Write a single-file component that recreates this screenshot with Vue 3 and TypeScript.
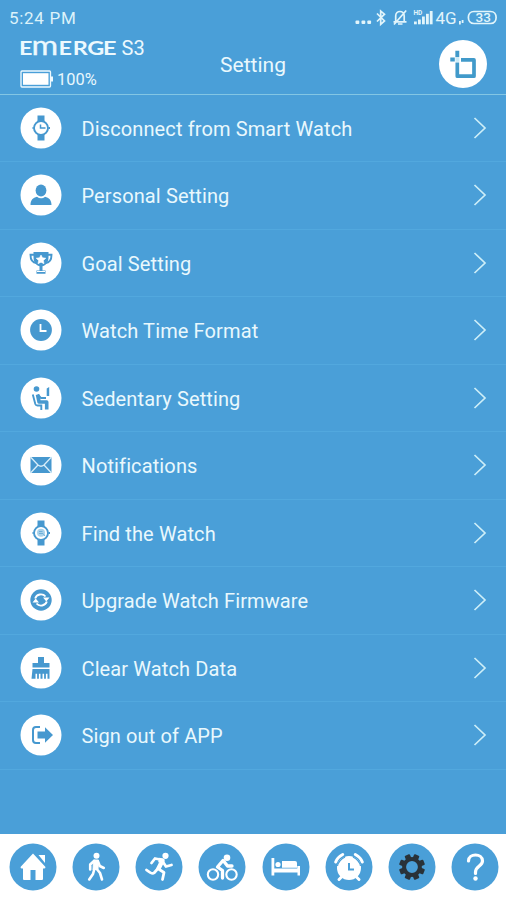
<script setup lang="ts">
interface Row {
  icon: string
  label: string
}

const rows: Row[] = [
  { icon: 'watch', label: 'Disconnect from Smart Watch' },
  { icon: 'person', label: 'Personal Setting' },
  { icon: 'trophy', label: 'Goal Setting' },
  { icon: 'clock', label: 'Watch Time Format' },
  { icon: 'seat', label: 'Sedentary Setting' },
  { icon: 'mail', label: 'Notifications' },
  { icon: 'find', label: 'Find the Watch' },
  { icon: 'sync', label: 'Upgrade Watch Firmware' },
  { icon: 'brush', label: 'Clear Watch Data' },
  { icon: 'exit', label: 'Sign out of APP' },
]

const tabs: string[] = ['home', 'walk', 'run', 'bike', 'bed', 'alarm', 'gear', 'help']
const teeth: number[] = [22.5, 67.5, 112.5, 157.5, 202.5, 247.5, 292.5, 337.5]
</script>

<template>
  <main class="screen">
    <header class="top">
      <div class="status">
        <span class="time">5:24 PM</span>
        <svg class="status-icons" viewBox="350 5 156 25" width="156" height="25">
          <g fill="#e2f5fb">
            <rect x="355.5" y="20.5" width="3.8" height="3.6" rx="1" />
            <rect x="361.5" y="20.5" width="3.8" height="3.6" rx="1" />
            <rect x="367.3" y="20.5" width="3.8" height="3.6" rx="1" />
            <rect x="414" y="21.5" width="2.8" height="2.8" />
            <rect x="418" y="19.5" width="2.8" height="4.8" />
            <rect x="422" y="16.5" width="2.8" height="7.8" />
            <rect x="426" y="13.8" width="2.8" height="10.5" />
            <rect x="429.8" y="11" width="2.8" height="13.3" />
            <text class="hd" x="413.5" y="14.5">HD</text>
            <text class="net" x="435.5" y="23.5">4G</text>
            <rect x="459" y="21" width="1.8" height="3.5" />
            <rect x="461.7" y="20" width="1.8" height="3" />
            <text class="pct" x="475.5" y="22.3">33</text>
          </g>
          <g fill="none" stroke="#e2f5fb" stroke-width="1.7">
            <path d="M377 13.5l7.5 7.500-3.800 3.300V11l3.800 3.200-7.500 7.300" />
            <path d="M393.500 21.800h13M395.700 21v-5c0-6 8.500-6 8.500 0v5M394 24.500l12.200-14M398 24h4.500" />
            <path d="M474 11.500h16.500c7.500 0 7.500 12 0 12H474c-7.500 0-7.500-12 0-12z" />
          </g>
        </svg>
      </div>
      <div class="brand-row">
        <div class="brand">
          <svg class="wordmark" viewBox="19 26 130 36" width="130" height="36">
            <text transform="translate(19 54.5) scale(1.2 1)"><tspan x="0">E</tspan><tspan class="arch" x="10.4">m</tspan><tspan x="33">E</tspan><tspan x="44.8">R</tspan><tspan x="56.8">G</tspan><tspan x="70">E</tspan></text>
            <text class="model" x="121.5" y="54.5">S3</text>
          </svg>
          <div class="battery">
            <svg viewBox="0 0 34 18" width="34" height="18">
              <rect x="1" y="1" width="29.5" height="16" rx="1" fill="none" stroke="#eefaff" stroke-width="1.3" />
              <rect x="3" y="3.2" width="25.5" height="11.6" fill="#fff" />
              <rect x="31" y="6.5" width="2" height="5" fill="#eefaff" />
            </svg>
            <span>100%</span>
          </div>
        </div>
        <h1>Setting</h1>
        <svg class="logo" viewBox="0 0 48 48" width="48" height="48">
          <circle cx="24" cy="24" r="24" fill="#fff" />
          <path d="M18.300 22.500V36.200H35V19.900H22" fill="none" stroke="#419aca" stroke-width="3.700" stroke-linejoin="round" />
          <path d="M18.300 10.700v6.500M11.300 19.500h4.500" fill="none" stroke="#419aca" stroke-width="3.900" />
          <rect x="16.400" y="17.800" width="4" height="4" fill="#c9eaf7" />
        </svg>
      </div>
    </header>

    <ul class="list">
      <li v-for="row in rows" :key="row.label">
        <svg class="badge" viewBox="0 0 42 42" width="42" height="42">
          <circle cx="21" cy="21" r="20.500" fill="#fff" />
          <g v-if="row.icon === 'watch' || row.icon === 'find'">
            <path d="M17.500 8.500h7v6h-7zM17.500 27.500h7v6h-7z" fill="#4698cf" />
            <circle cx="21" cy="21" r="7" fill="#fff" stroke="#4698cf" stroke-width="1.900" />
            <path d="M12.500 20h1v2h-1zM28.500 20h1.500v2h-1.500z" fill="#4698cf" />
            <path v-if="row.icon === 'watch'" d="M20.500 17.500v3.500h5" fill="none" stroke="#4698cf" stroke-width="1.500" />
            <g v-else>
              <circle cx="21" cy="20.800" r="4" fill="#a9d2ea" />
              <path d="M19 19.500h3.500M19 21.500h4l2 2.500" fill="none" stroke="#6eb0da" />
            </g>
          </g>
          <g v-else-if="row.icon === 'person'" fill="#4698cf">
            <ellipse cx="21" cy="16.500" rx="5.400" ry="6" />
            <path d="M10.500 31c0-5 2.500-7.500 6.500-8.300 2.500 2 5.500 2 8 0 4 .8 6.500 3.300 6.500 8.300z" />
          </g>
          <g v-else-if="row.icon === 'trophy'">
            <path d="M14 12.800h-3.500c0 5 2 8 6 8.200M28 12.800h3.500c0 5-2 8-6 8.200" fill="none" stroke="#4698cf" stroke-width="1.900" />
            <path d="M13.500 10h15v5c0 5-2 8-6 9.200v4.300h3v3.200h-9v-3.200h3v-4.300c-4-1.200-6-4.200-6-9.200z" fill="#4698cf" />
            <path d="M17 29.500h8" stroke="#fff" stroke-width="1" />
            <path d="M21 13l1.500 2.800 3.300.4-2.400 2.300.6 3.200-3-1.500-3 1.500.6-3.200-2.400-2.300 3.300-.4z" fill="#fff" stroke="#fff" stroke-width=".6" />
          </g>
          <g v-else-if="row.icon === 'clock'">
            <circle cx="21" cy="21" r="10.900" fill="#4698cf" />
            <path d="M20.500 15v7h6" fill="none" stroke="#fff" stroke-width="1.800" />
          </g>
          <g v-else-if="row.icon === 'seat'">
            <circle cx="16.500" cy="12" r="2.800" fill="#4698cf" />
            <path d="M17.500 17.500l1.600 7.500h7.600v7.500" fill="none" stroke="#4698cf" stroke-width="3.600" stroke-linejoin="round" />
            <path d="M18 17.500l3 3.500h5M12.800 17.500l2.500 9.500q.5 1.500 2 1.500h4v4.500" fill="none" stroke="#4698cf" stroke-width="1.900" />
            <path d="M26.700 11.500l2.500-1.500v9h-2.500z" fill="#4698cf" />
          </g>
          <g v-else-if="row.icon === 'mail'">
            <rect x="10.500" y="13" width="21" height="16" fill="#4698cf" />
            <path d="M10.500 13l7.500 8q3 2.500 6 0l7.500-8M10.500 29l7.500-8M31.500 29l-7.500-8" fill="none" stroke="#d8eef9" stroke-width="1.300" />
          </g>
          <g v-else-if="row.icon === 'sync'">
            <circle cx="21" cy="21" r="10.700" fill="#4698cf" />
            <path d="M15.200 19.500c1.300-4.500 7.500-5.500 10.300-2M26.800 22.500c-1.300 4.500-7.500 5.500-10.300 2" fill="none" stroke="#fff" stroke-width="1.900" />
            <path d="M12.500 23.500h6.500l-3.300-4zM23 18.500h6.500l-3.200 4z" fill="#fff" />
          </g>
          <g v-else-if="row.icon === 'brush'" fill="#4698cf">
            <path d="M18 10h6v6h5.500v4.500h-17V16H18z" />
            <path d="M12.500 22h17v9.700h-2v-5h-1.600v5h-1.800v-5h-1.600v5h-2v-5h-1.600v5h-1.800v-5h-1.600v5h-4z" />
          </g>
          <g v-else>
            <path d="M20 13h-4q-3 0-3 3v10q0 3 3 3h4" fill="none" stroke="#4698cf" stroke-width="2" />
            <path d="M17.500 17.500h7.500v-4.200l8 7.700-8 7.700v-4.200h-7.500z" fill="#4698cf" />
          </g>
        </svg>
        <span class="label">{{ row.label }}</span>
        <svg class="chevron" viewBox="0 0 14 24" width="14" height="24">
          <path d="M1.500 2l10.500 10L1.500 22" fill="none" stroke="#cdeef8" stroke-width="1.700" />
        </svg>
      </li>
    </ul>

    <nav class="tabs">
      <svg v-for="tab in tabs" :key="tab" viewBox="0 0 48 48" width="48" height="48">
        <circle cx="24" cy="24" r="23.500" fill="#4a9fd8" />
        <g v-if="tab === 'home'" fill="#fff">
          <path d="M24 10.500L11.500 24q0 1.500 1.500 1.500h1V36q0 1 1 1h6.500V27h5v10H33q1 0 1-1V25.500h1q1.500 0 1.500-1.500z" />
          <path d="M29.500 12H36v8z" />
        </g>
        <g v-else-if="tab === 'walk'">
          <circle cx="24.500" cy="12.800" r="3" fill="#fff" />
          <path d="M21.500 17h5L26 26l-5 1z" fill="#fff" stroke="#fff" stroke-linejoin="round" />
          <path d="M22 18l-3.800 3.500v5M26 18.500l1.800 4.500 4 2M22.500 25.500L21 31l-3.800 5.500M24 25l4 5 2 6.500" fill="none" stroke="#fff" stroke-width="2.600" stroke-linecap="round" stroke-linejoin="round" />
        </g>
        <g v-else-if="tab === 'run'">
          <circle cx="30.500" cy="12.800" r="3.100" fill="#fff" />
          <path d="M23.500 17l4 .500-4.500 9" fill="none" stroke="#fff" stroke-width="4.500" stroke-linejoin="round" />
          <path d="M25 16.500l-5-1-3.500 4.500M28 19l3 4.500 5.500-1.500M22.500 26l-3.500 4q-2 1.500-7.500-3M23.500 26l5.500 3.500-1.500 7" fill="none" stroke="#fff" stroke-width="2.800" stroke-linecap="round" stroke-linejoin="round" />
        </g>
        <g v-else-if="tab === 'bike'">
          <circle cx="29" cy="14.700" r="3.300" fill="#fff" />
          <g fill="none" stroke="#fff">
            <circle cx="15" cy="31.500" r="5.200" stroke-width="2.100" />
            <circle cx="33.500" cy="31.500" r="5.200" stroke-width="2.100" />
            <path d="M25 17.500L19.500 24l5 3.500V35M26 18.500l3.500 4.500h4.500" stroke-width="3.300" stroke-linecap="round" stroke-linejoin="round" />
          </g>
        </g>
        <g v-else-if="tab === 'bed'" fill="#fff">
          <path d="M9.500 15h2.800v10.500h23V23H38v9.500h-2.500V29.500H12.300v3H9.500z" />
          <circle cx="16" cy="21.500" r="2.600" />
          <path d="M20 18h13q2 0 2 2v4.700H20z" />
        </g>
        <g v-else-if="tab === 'alarm'">
          <circle cx="24" cy="25" r="12" fill="#fff" />
          <path d="M10.700 19q1.500-4.500 7-7.500M30.300 11.500q5.500 3 7 7.500M16.500 34l-2.500 2.500M31.500 34l2.500 2.500" fill="none" stroke="#fff" stroke-width="3" stroke-linecap="round" />
          <path d="M12.500 23q1-5.500 7.500-9M35.500 23q-1-5.500-7.500-9" fill="none" stroke="#4a9fd8" stroke-width="1.200" />
          <path d="M24 20v6.500h5" fill="none" stroke="#4a9fd8" stroke-width="2" />
        </g>
        <g v-else-if="tab === 'gear'">
          <rect v-for="angle in teeth" :key="angle" x="21.200" y="11" width="5.600" height="6" rx="1" fill="#293239" :transform="`rotate(${angle} 24 24)`" />
          <circle cx="24" cy="24" r="7.900" fill="none" stroke="#293239" stroke-width="4" />
        </g>
        <g v-else>
          <path d="M17.500 18c0-8 14-8 14 0 0 5-7 5-7 11v1.500" fill="none" stroke="#fff" stroke-width="3.200" stroke-linecap="round" />
          <circle cx="24.500" cy="35.500" r="2.200" fill="#fff" />
        </g>
      </svg>
    </nav>
  </main>
</template>

<style>
body {
  margin: 0;
}
</style>

<style scoped>
.screen {
  width: 506px;
  height: 900px;
  display: flex;
  flex-direction: column;
  background: #4a9fd8;
  color: #e9f8fd;
  font-family: Roboto, "Liberation Sans", sans-serif;
  overflow: hidden;
}
.top {
  box-sizing: border-box;
  height: 94.5px;
  flex: none;
  border-bottom: 1.5px solid #83c6e4;
}
.status {
  height: 38px;
  display: flex;
  justify-content: space-between;
}
.time {
  padding: 8px 0 0 9px;
  font-size: 17px;
  line-height: 20px;
  letter-spacing: 0.7px;
  color: #dcf2fa;
}
.status-icons {
  margin-top: 5px;
}
.hd {
  font-size: 6.5px;
  font-weight: 700;
}
.net {
  font-size: 17px;
}
.pct {
  font-size: 13.5px;
  font-weight: 500;
}
.brand-row {
  display: grid;
  grid-template-columns: 200px 106px 1fr;
}
.brand {
  padding-left: 19px;
}
.wordmark {
  display: block;
  margin: -12px 0 -4px;
  font-family: Lato, sans-serif;
  font-size: 19.5px;
  font-weight: 700;
  fill: #ecf9fe;
}
.arch {
  font-size: 27px;
  font-weight: 400;
  stroke: #ecf9fe;
  stroke-width: 0.3px;
}
.model {
  font-family: Roboto, sans-serif;
  font-size: 20px;
  font-weight: 400;
}
.battery {
  display: flex;
  align-items: center;
  gap: 3px;
  margin-top: 12px;
  height: 18px;
  padding-left: 1px;
  font-size: 16.4px;
}
.battery span {
  margin-top: 1px;
}
h1 {
  margin: 14px 0 0;
  text-align: center;
  font-size: 21px;
  line-height: 26px;
  font-weight: 400;
}
.logo {
  justify-self: end;
  margin: 2px 19px 0 0;
}
.list {
  margin: 0;
  padding: 0;
  list-style: none;
}
.list li {
  box-sizing: border-box;
  height: 67.5px;
  display: flex;
  align-items: center;
  padding: 0 19px 0 20px;
  border-bottom: 1px solid #52a8de;
}
.label {
  flex: 1;
  padding: 2px 0 0 19.5px;
  font-size: 20px;
  line-height: 26px;
  letter-spacing: 0.12px;
}
.tabs {
  margin-top: auto;
  height: 66px;
  display: grid;
  grid-template-columns: repeat(8, 63.25px);
  align-items: center;
  justify-items: center;
  padding-left: 1px;
  background: #fff;
}
</style>
